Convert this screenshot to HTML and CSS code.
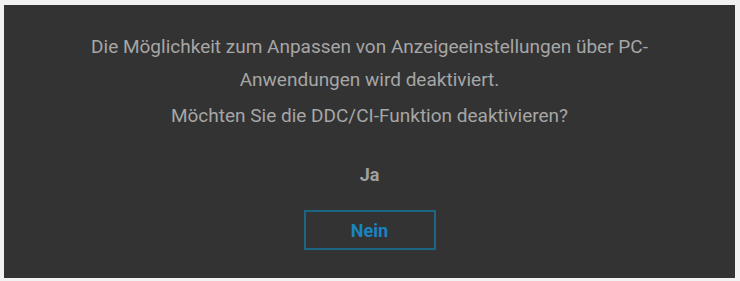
FILE: index.html
```html
<!DOCTYPE html>
<html lang="de">
<head>
<meta charset="utf-8">
<link rel="stylesheet" href="styles.css">
</head>
<body>
<div class="panel">
  <p class="msg line1">Die Möglichkeit zum Anpassen von Anzeigeeinstellungen über PC-</p>
  <p class="msg line2">Anwendungen wird deaktiviert.</p>
  <p class="msg line3">Möchten Sie die DDC/CI-Funktion deaktivieren?</p>
  <div class="options">
    <div class="opt ja">Ja</div>
    <div class="opt nein">Nein</div>
  </div>
</div>
</body>
</html>
```
FILE: styles.css
```css
html, body {
  margin: 0;
  padding: 0;
  background: #f2f2f2;
  width: 740px;
  height: 281px;
  overflow: hidden;
}
body {
  padding: 5px 5px 3px 4px;
  box-sizing: border-box;
}
.panel {
  background: #333333;
  height: 273px;
  box-sizing: border-box;
  padding-top: 25px;
  display: flex;
  flex-direction: column;
  align-items: center;
  font-family: Roboto, "Liberation Sans", sans-serif;
  color: #a6a6a6;
}
.msg {
  margin: 0;
  font-size: 19px;
  line-height: 33px;
  text-align: center;
}
.line3 {
  margin-top: 3px;
}
.options {
  margin-top: 31px;
  display: flex;
  flex-direction: column;
  align-items: center;
}
.opt {
  font-weight: bold;
  font-size: 18px;
  font-family: Roboto, "Liberation Sans", sans-serif;
}
.ja {
  color: #a0a0a0;
  height: 24px;
  line-height: 24px;
}
.nein {
  margin-top: 23px;
  width: 132px;
  height: 40px;
  box-sizing: border-box;
  border: 2px solid #1d6585;
  color: #1a84c0;
  display: flex;
  align-items: center;
  justify-content: center;
}
```
